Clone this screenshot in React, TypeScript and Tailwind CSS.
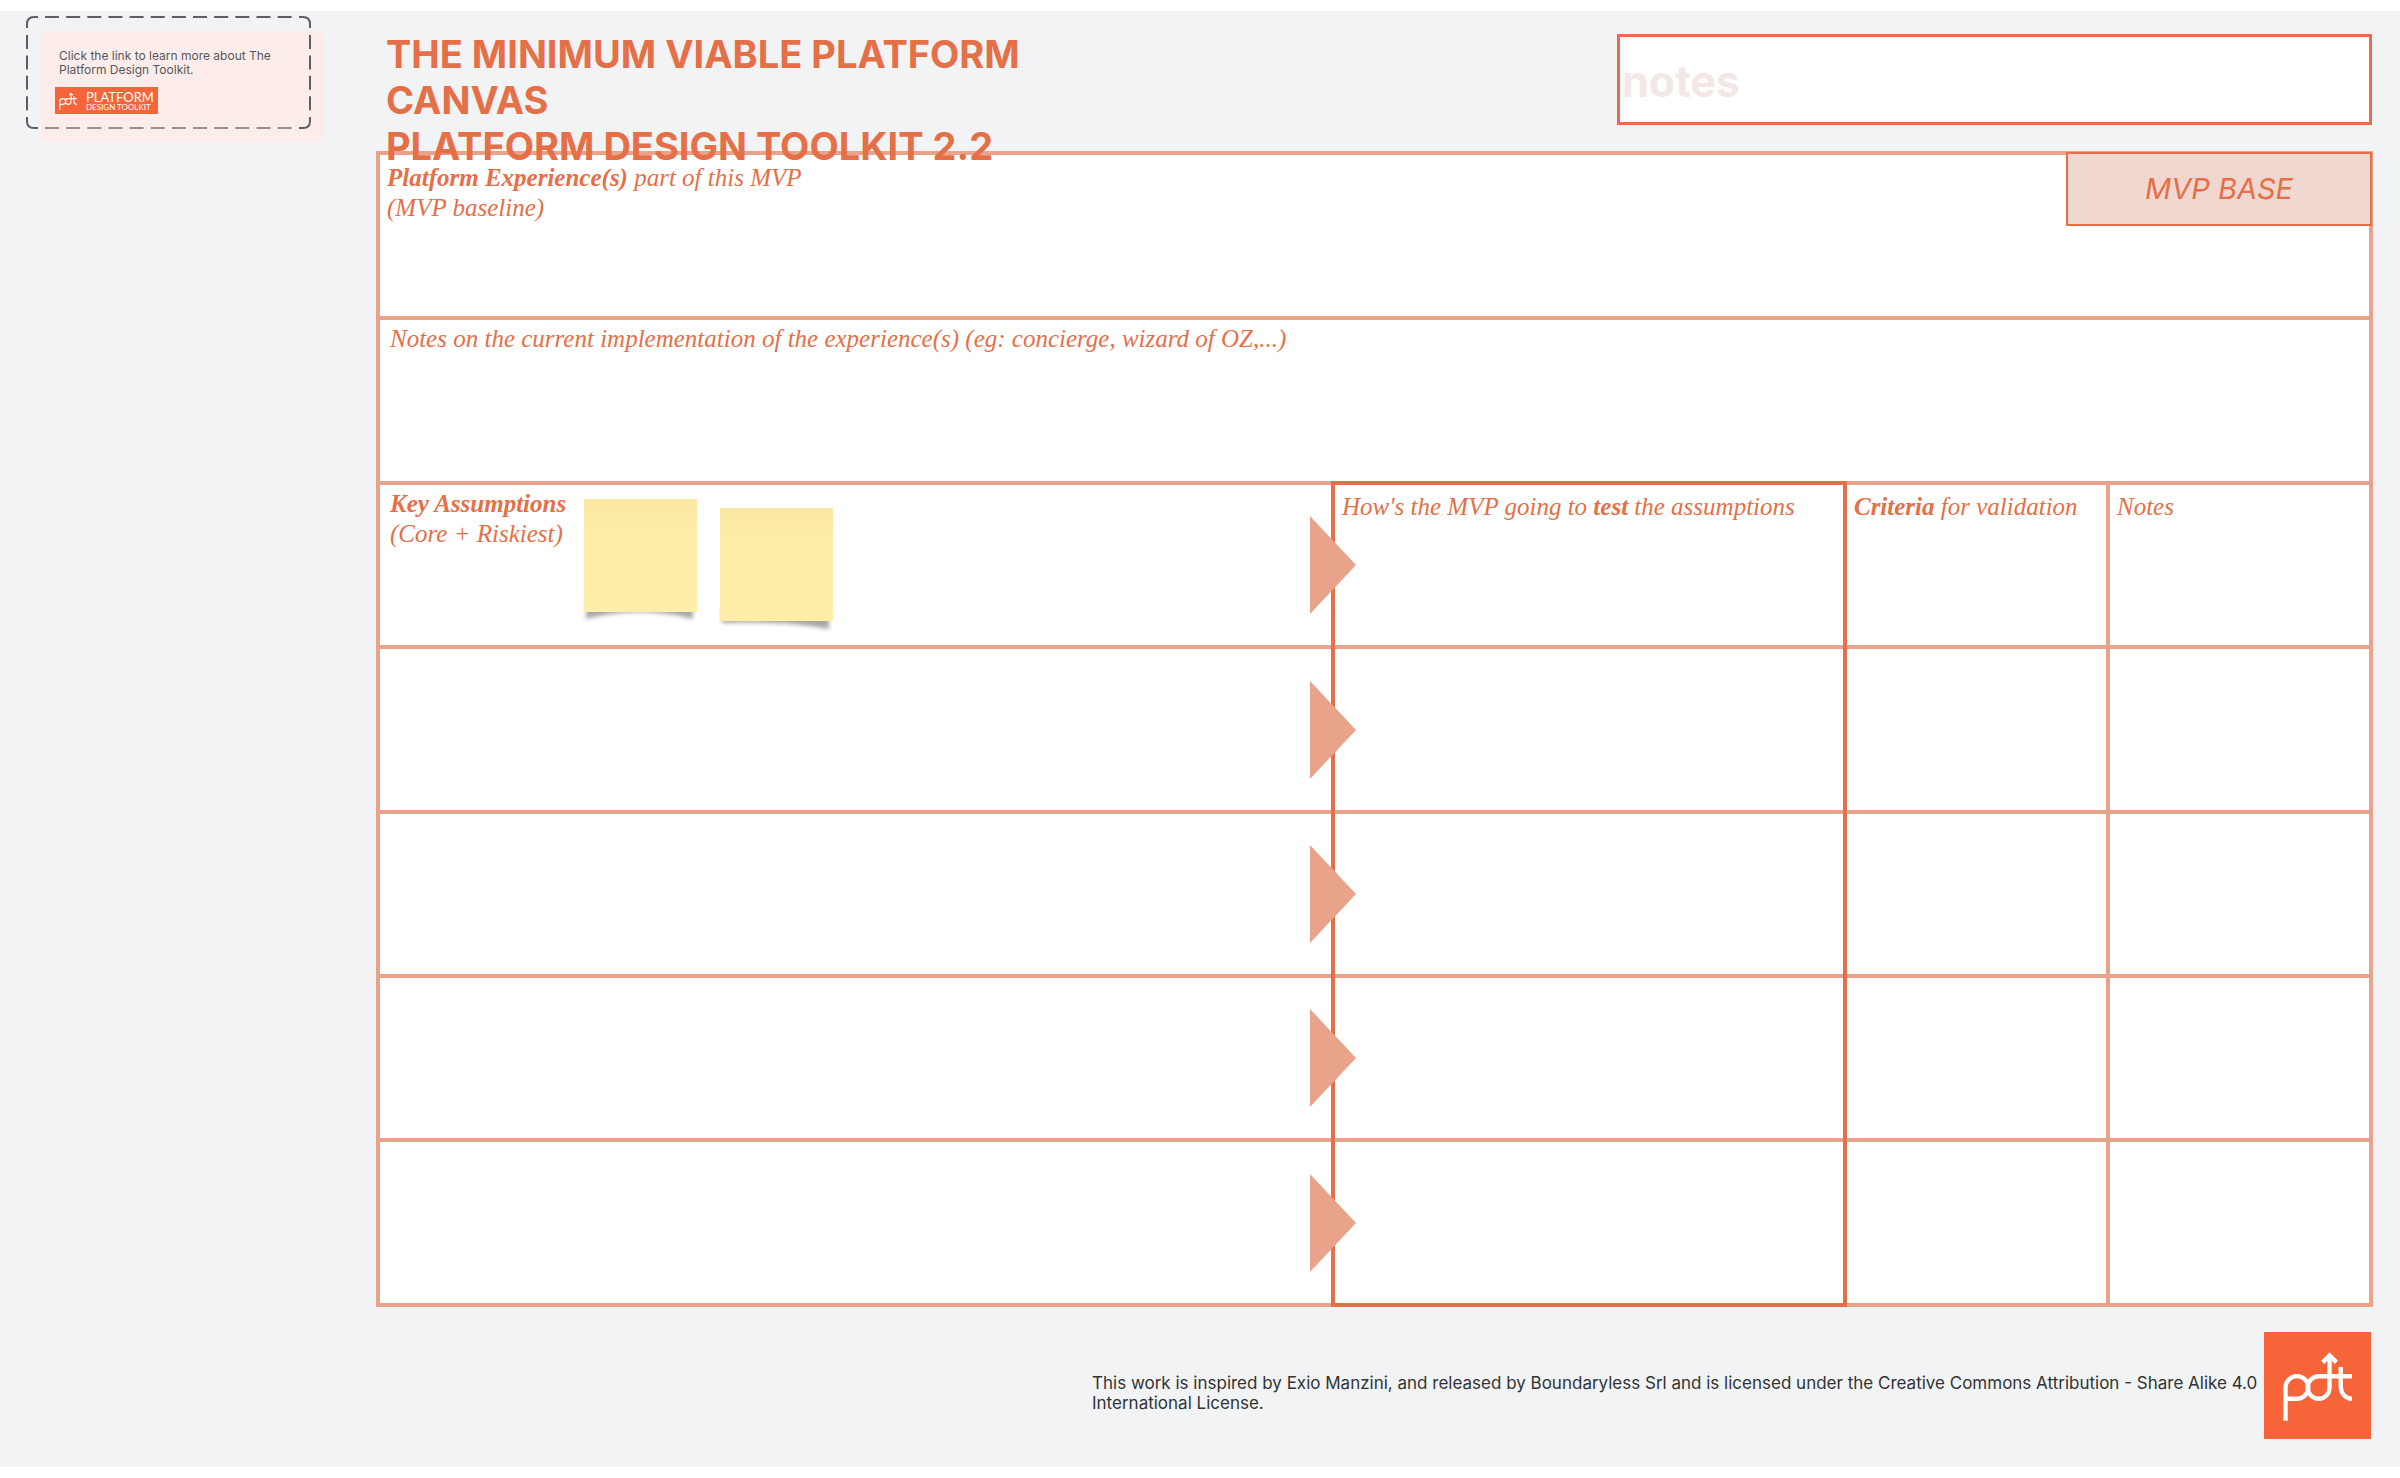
import type { ReactNode } from 'react';

const EMPTY_ROWS = ['h-[165px]', 'h-[164px]', 'h-[164px]', 'h-[165px]'];

function PdtMark({ className }: { className: string }) {
  return (
    <svg viewBox="56 54 206 212" className={className} fill="none" stroke="#fff" strokeWidth="13" aria-hidden="true">
      <path d="M63.5 265V166a34 34 0 0 1 68 0a34 34 0 0 1-34 33.500H64" />
      <path d="M262 132.500H163a33.500 33.500 0 0 0 0 67a32 33 0 0 0 32-33V70" />
      <path d="M228.500 105v58c0 21 14 36 33.500 36.500" />
      <path d="M174.500 91l20.500-21l20.500 21" />
    </svg>
  );
}

function CalloutFrame() {
  return (
    <svg viewBox="0 0 285 113" className="absolute left-[26px] top-[5px] w-[285px] h-[113px]" fill="none" stroke="#5c5f61" strokeWidth="2" aria-hidden="true">
      <path d="M1 12V8Q1 1 8 1H12M273 1H277Q284 1 284 8V12M284 101V105Q284 112 277 112H273M1 101V105Q1 112 8 112H12" />
      <path d="M19 1H268" strokeDasharray="14 7.150" />
      <path d="M1 19V96M284 19V96" strokeDasharray="14 6.400" />
      <path d="M19 112H268" strokeDasharray="14 7.150" stroke="#94928f" />
    </svg>
  );
}

function Callout() {
  return (
    <a href="#toolkit" className="block">
      <div className="ml-[41px] mt-5 w-[283px] h-[111px] rounded-[5px] bg-[#fcedea] pl-[18px] pt-[18px]">
        <p className="text-[12px] leading-[14px] text-[#55585a] w-[225px]">
          Click the link to learn more about The Platform Design Toolkit.
        </p>
        <div className="-ml-1 mt-[10px] flex w-[103px] h-[27px] items-center gap-[9px] bg-[#f6643a] pl-[4px]">
          <PdtMark className="w-[18px] h-[18px] shrink-0" />
          <div className="font-['Lato',sans-serif] text-white">
            <div className="text-[13px] leading-[12px]">PLATFORM</div>
            <div className="text-[8px] leading-[8px] whitespace-nowrap">DESIGN TOOLKIT</div>
          </div>
        </div>
      </div>
      <CalloutFrame />
    </a>
  );
}

function StickyNote({ id, shadow, className }: { id: string; shadow: string; className: string }) {
  return (
    <svg viewBox="0 0 113 124" className={`w-[113px] h-[124px] shrink-0 overflow-visible ${className}`} aria-hidden="true">
      <defs>
        <linearGradient id={`${id}-paper`} x1="0" y1="0" x2="0" y2="1">
          <stop offset="0" stopColor="#f9e7a1" />
          <stop offset="0.300" stopColor="#ffeea8" />
        </linearGradient>
        <filter id={`${id}-blur`} x="-20%" y="-20%" width="140%" height="140%">
          <feGaussianBlur stdDeviation="2" />
        </filter>
      </defs>
      <path d={shadow} fill="#000" fillOpacity="0.350" filter={`url(#${id}-blur)`} />
      <rect width="113" height="113" fill={`url(#${id}-paper)`} />
    </svg>
  );
}

function Arrow() {
  return (
    <svg viewBox="0 0 46 98" className="absolute -right-[25px] top-1/2 -translate-y-1/2 w-[46px] h-[98px]" aria-hidden="true">
      <path d="M0 0L46 49L0 98Z" fill="#e9a38b" />
    </svg>
  );
}

function HeadCell({ children, className }: { children: ReactNode; className: string }) {
  return (
    <th scope="col" className={`align-top text-left font-normal pt-[7px] ${className}`}>
      {children}
    </th>
  );
}

function MvpCanvas() {
  return (
    <div className="relative">
      <table className="w-full table-fixed border-collapse border-4 border-[#e9a38b] bg-white font-['Liberation_Serif',serif] italic text-[25px] leading-[30px] text-[#e56f47]">
        <colgroup>
          <col />
          <col className="w-[512px]" />
          <col className="w-[263px]" />
          <col className="w-[263px]" />
        </colgroup>
        <tbody>
          <tr className="h-[165px] border-4 border-[#e9a38b]">
            <td colSpan={4} className="align-top pl-[7px] pt-2">
              <b>Platform Experience(s)</b> part of this MVP
              <br />
              (MVP baseline)
            </td>
          </tr>
          <tr className="h-[165px] border-4 border-[#e9a38b]">
            <td colSpan={4} className="align-top pl-[10px] pt-1">
              Notes on the current implementation of the experience(s) (eg: concierge, wizard of OZ,...)
            </td>
          </tr>
          <tr className="h-[164px] border-4 border-[#e9a38b]">
            <th scope="col" className="relative align-top text-left font-normal pl-[10px] pt-1">
              <div className="flex">
                <div className="w-[194px] shrink-0">
                  <b>Key Assumptions</b>
                  <br />
                  (Core + Riskiest)
                </div>
                <StickyNote id="first" className="mt-[10px]" shadow="M2 100H109V120Q56 106 2 120Z" />
                <StickyNote id="second" className="mt-[19px] ml-[23px]" shadow="M2 100H109V121Q70 113 2 115Z" />
              </div>
              <Arrow />
            </th>
            <HeadCell className="pl-[7px] border-4 border-b-0 border-[#e56f47]">
              How's the MVP going to <b>test</b> the assumptions
            </HeadCell>
            <HeadCell className="pl-[7px]">
              <b>Criteria</b> for validation
            </HeadCell>
            <HeadCell className="pl-[7px] border-l-4 border-[#e9a38b]">Notes</HeadCell>
          </tr>
          {EMPTY_ROWS.map((height, i) => (
            <tr key={i} className={`border-4 border-[#e9a38b] ${height}`}>
              <td className="relative">
                <Arrow />
              </td>
              <td className={i === EMPTY_ROWS.length - 1 ? 'border-x-4 border-b-4 border-[#e56f47]' : 'border-x-4 border-[#e56f47]'} />
              <td />
              <td className="border-l-4 border-[#e9a38b]" />
            </tr>
          ))}
        </tbody>
      </table>
      <div className="absolute right-px top-px flex w-[306px] h-[74px] items-center justify-center border-2 border-[#e56f47] bg-[#f0d7d0] text-[29px] leading-[36px] italic text-[#e56f47]">
        MVP BASE
      </div>
    </div>
  );
}

export default function App() {
  return (
    <div className="min-h-screen bg-white py-[11px] font-['Inter',sans-serif]">
      <main className="flex bg-[#f1f3f5]">
        <aside className="relative w-[376px] shrink-0">
          <Callout />
        </aside>
        <div className="min-w-0 flex-1 pr-[27px]">
          <header className="relative z-10 flex h-[140px] items-start justify-between pl-[10px] pr-px">
            <h1 className="pt-[20px] w-[700px] text-[38px] leading-[46px] font-bold text-[#e56f47]">
              THE MINIMUM VIABLE PLATFORM CANVAS
              <br />
              PLATFORM DESIGN TOOLKIT 2.2
            </h1>
            <input
              aria-label="notes"
              placeholder="notes"
              className="mt-[23px] w-[755px] h-[91px] border-3 border-[#e56f47] bg-white pl-[2px] pt-[2px] text-[43px] font-bold placeholder:text-[#f3e8e6] outline-none"
            />
          </header>
          <MvpCanvas />
          <footer className="flex items-start justify-end pt-[25px] pb-7 pr-[2px]">
            <p className="w-[1172px] pt-[41px] text-[17px] leading-[20px] text-[#333]">
              This work is inspired by Exio Manzini, and released by Boundaryless Srl and is licensed under the Creative
              Commons Attribution - Share Alike 4.0 International License.
            </p>
            <div className="flex w-[107px] h-[107px] shrink-0 bg-[#f6643a] pl-[19px] pt-[18px]">
              <PdtMark className="w-[69px] h-[71px]" />
            </div>
          </footer>
        </div>
      </main>
    </div>
  );
}
